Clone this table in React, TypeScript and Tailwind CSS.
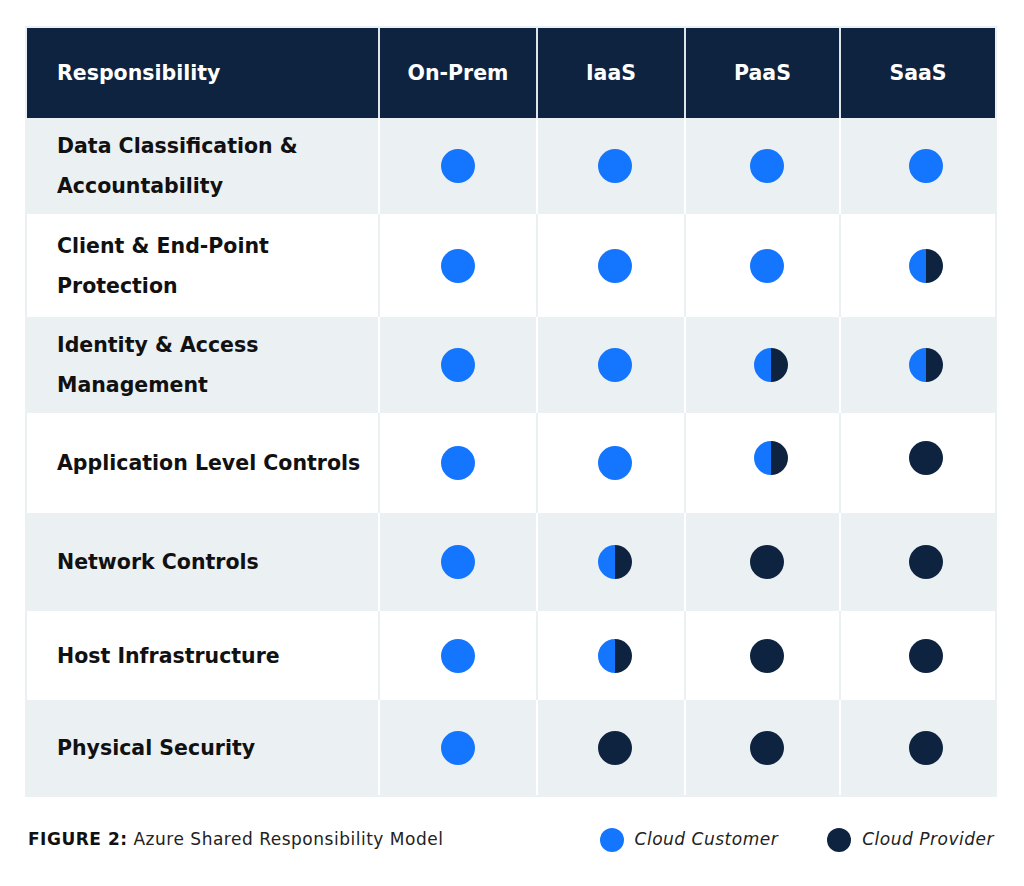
type Mark = "c" | "h" | "p";

const rows: { label: string[]; marks: Mark[]; h: string; bg: "gray" | "white"; lift?: boolean[] }[] = [
  { label: ["Data Classification &", "Accountability"], marks: ["c", "c", "c", "c"], h: "h-[96px]", bg: "gray" },
  { label: ["Client & End-Point", "Protection"], marks: ["c", "c", "c", "h"], h: "h-[103px]", bg: "white" },
  { label: ["Identity & Access", "Management"], marks: ["c", "c", "h", "h"], h: "h-[96px]", bg: "gray" },
  { label: ["Application Level Controls"], marks: ["c", "c", "h", "p"], h: "h-[100px]", bg: "white", lift: [false, false, true, true] },
  { label: ["Network Controls"], marks: ["c", "h", "p", "p"], h: "h-[98px]", bg: "gray" },
  { label: ["Host Infrastructure"], marks: ["c", "h", "p", "p"], h: "h-[89px]", bg: "white" },
  { label: ["Physical Security"], marks: ["c", "p", "p", "p"], h: "h-[95px]", bg: "gray" },
];

const heads = ["On-Prem", "IaaS", "PaaS", "SaaS"];

// circles sit a little right of centre in the later columns
const shift = ["", "translate-x-[4px]", "translate-x-[4px]", "translate-x-[8px]"];
const halfShift = ["", "translate-x-[4px]", "translate-x-[8px]", "translate-x-[8px]"];

function Dot({ mark, className = "" }: { mark: Mark; className?: string }) {
  if (mark === "h") {
    return (
      <span className={`flex w-[34px] h-[34px] rounded-full overflow-hidden ${className}`}>
        <span className="w-1/2 h-full bg-[#1476ff]" />
        <span className="w-1/2 h-full bg-[#0e2340]" />
      </span>
    );
  }
  return (
    <span
      className={`block w-[34px] h-[34px] rounded-full ${mark === "c" ? "bg-[#1476ff]" : "bg-[#0e2340]"} ${className}`}
    />
  );
}

export default function App() {
  return (
    <div className="w-[1024px] h-[886px] bg-white pt-[26px] font-['DejaVu_Sans','Liberation_Sans',sans-serif]">
      <div className="ml-[25px] w-[972px] border-2 border-[#ebf0f3]">
        <div className="grid grid-cols-[353px_158px_148px_155px_154px] h-[90px] bg-[#0e2340] text-white text-[20.5px] font-bold">
          <div className="flex items-center pl-[30px] border-r-2 border-[#dfe5ea]">Responsibility</div>
          {heads.map((h, i) => (
            <div
              key={h}
              className={`flex items-center justify-center ${i < 3 ? "border-r-2 border-[#dfe5ea]" : ""}`}
            >
              {h}
            </div>
          ))}
        </div>

        {rows.map((r) => {
          const bg = r.bg === "gray" ? "bg-[#ebf0f3]" : "bg-white";
          const line = r.bg === "gray" ? "border-white" : "border-[#ebf0f3]";
          return (
            <div
              key={r.label.join(" ")}
              className={`grid grid-cols-[353px_158px_148px_155px_154px] ${r.h} ${bg}`}
            >
              <div className={`flex flex-col justify-center pl-[30px] border-r-2 ${line} text-[20.5px] font-bold leading-[40px] text-[#111]`}>
                {r.label.map((l) => (
                  <span key={l}>{l}</span>
                ))}
              </div>
              {r.marks.map((m, i) => (
                <div
                  key={i}
                  className={`flex items-center justify-center ${i < 3 ? `border-r-2 ${line}` : ""}`}
                >
                  <Dot
                    mark={m}
                    className={`${m === "h" ? halfShift[i] : shift[i]} ${r.lift?.[i] ? "-mt-[10px]" : ""}`}
                  />
                </div>
              ))}
            </div>
          );
        })}
      </div>

      <div className="mt-[31px] ml-[28px] w-[966px] h-[24px] flex items-center">
        <p className="text-[17px] tracking-[0.03em] text-[#222]">
          <span className="font-bold text-[#111]">FIGURE 2:</span> Azure Shared Responsibility Model
        </p>
        <div className="ml-auto flex items-center">
          <span className="w-[24px] h-[24px] rounded-full bg-[#1476ff]" />
          <span className="ml-[11px] text-[17px] tracking-[0.03em] italic text-[#222]">Cloud Customer</span>
          <span className="ml-[49px] w-[24px] h-[24px] rounded-full bg-[#0e2340]" />
          <span className="ml-[11px] text-[17px] tracking-[0.03em] italic text-[#222]">Cloud Provider</span>
        </div>
      </div>
    </div>
  );
}
